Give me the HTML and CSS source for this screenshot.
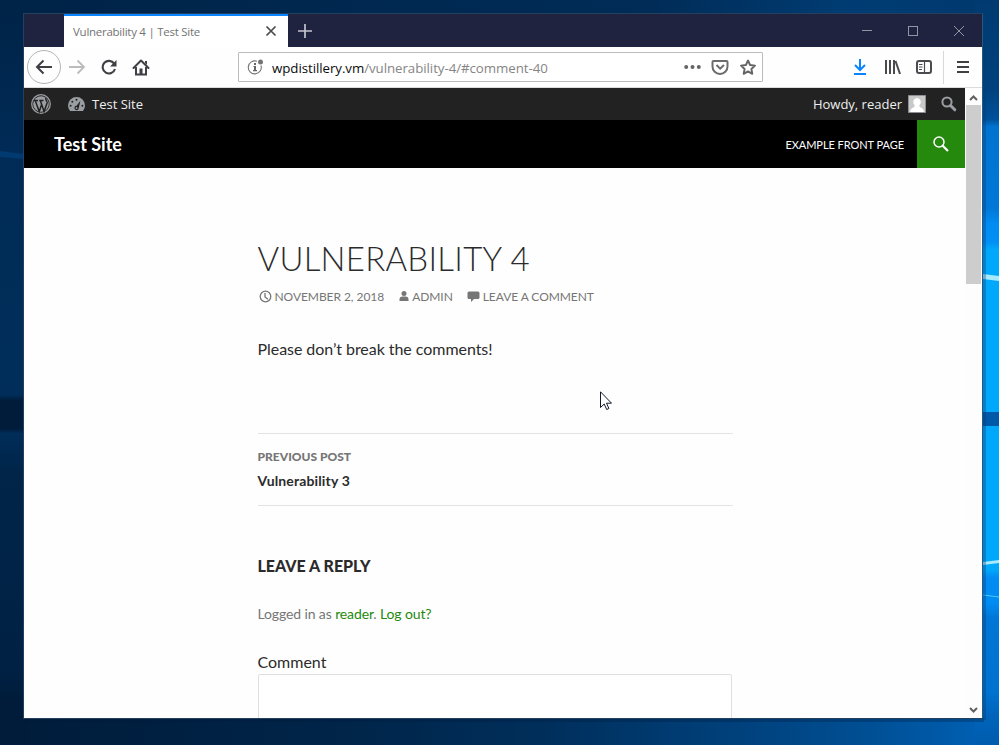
FILE: index.html
```html
<!DOCTYPE html>
<html lang="en">
<head>
<meta charset="utf-8">
<title>Vulnerability 4 | Test Site</title>
<link rel="stylesheet" href="styles.css">
</head>
<body>
<svg class="wallpaper" viewBox="0 0 999 745" aria-hidden="true">
  <defs>
    <linearGradient id="top" x1="0" x2="1"><stop offset="0" stop-color="#002347"/><stop offset=".65" stop-color="#002c57"/><stop offset=".85" stop-color="#003c73"/><stop offset="1" stop-color="#00386d"/></linearGradient>
    <linearGradient id="bottom" x1="0" x2="1"><stop offset="0" stop-color="#001c3a"/><stop offset=".1" stop-color="#001e3e"/><stop offset=".35" stop-color="#002549"/><stop offset=".55" stop-color="#002f5c"/><stop offset=".75" stop-color="#00427e"/><stop offset=".87" stop-color="#004f94"/><stop offset="1" stop-color="#0062b8"/></linearGradient>
    <linearGradient id="right" x1="0" y1="0" x2="0" y2="1"><stop offset="0" stop-color="#003a70"/><stop offset=".12" stop-color="#00427e"/><stop offset=".16" stop-color="#00509a"/><stop offset=".17" stop-color="#0073d0"/><stop offset=".28" stop-color="#0078d8"/><stop offset=".3" stop-color="#008cf2"/><stop offset=".325" stop-color="#0090f5"/><stop offset=".335" stop-color="#00a8fb"/><stop offset=".765" stop-color="#00a8fb"/><stop offset=".775" stop-color="#008cf2"/><stop offset=".81" stop-color="#008cf2"/><stop offset=".83" stop-color="#0076d6"/><stop offset=".93" stop-color="#0072d0"/><stop offset=".96" stop-color="#0064bb"/><stop offset="1" stop-color="#005cae"/></linearGradient>
    <linearGradient id="left" x1="0" y1="0" x2="0" y2="1"><stop offset="0" stop-color="#002347"/><stop offset=".2" stop-color="#002b56"/><stop offset=".5" stop-color="#002e5a"/><stop offset=".53" stop-color="#002d59"/><stop offset=".538" stop-color="#001c3a"/><stop offset=".575" stop-color="#001c3a"/><stop offset=".582" stop-color="#002d59"/><stop offset=".63" stop-color="#002549"/><stop offset=".9" stop-color="#002144"/><stop offset=".94" stop-color="#001c3a"/><stop offset="1" stop-color="#001c3a"/></linearGradient>
  </defs>
  <rect width="999" height="16" fill="url(#top)"/>
  <rect y="710" width="999" height="35" fill="url(#bottom)"/>
  <rect width="30" height="745" fill="url(#left)"/>
  <rect x="975" width="24" height="745" fill="url(#right)"/>
  <path d="M0 151l24 3v5l-24-2z" fill="#003a70"/>
  <path d="M975 412h24v14h-24z" fill="#0058a8"/>
  <path d="M975 273l24 3v5l-24-3zM975 563l24-3v3l-24 3z" fill="#a5eaff"/>
  <path d="M975 594l24 3" stroke="#49caff"/>
  <path d="M982 14h4v706h-4z" fill="#003d78" opacity=".35"/>
  <path d="M24 718h960v4H24z" fill="#001c3a" opacity=".3"/>
</svg>
<div class="window">
  <div class="titlebar">
    <div class="tab"><span>Vulnerability 4 | Test Site</span>
      <svg width="12" height="12" viewBox="0 0 12 12"><path d="M1.500 1.500l9 9M10.500 1.500l-9 9" stroke="#4a4a4f" stroke-width="1.700"/></svg>
    </div>
    <svg class="plus" width="14" height="14" viewBox="0 0 14 14"><path d="M7 0v14M0 7h14" stroke="#c4c4ce" stroke-width="1.700"/></svg>
    <svg class="controls" width="104" height="12" viewBox="0 0 104 12" fill="none" stroke="#9494a3" shape-rendering="crispEdges"><path d="M0 5.500h10M46.500 1.500h9v9h-9z"/><path d="M92 1l10 10M102 1L92 11" shape-rendering="auto"/></svg>
  </div>
  <div class="toolbar">
    <div class="nav">
      <span class="back"><svg width="18" height="16" viewBox="0 0 18 16"><path d="M17 8H2M8.500 1.500L2 8l6.500 6.500" fill="none" stroke="#3f3f44" stroke-width="2"/></svg></span>
      <svg width="18" height="16" viewBox="0 0 18 16"><path d="M1 8h15M9.500 1.500L16 8l-6.500 6.500" fill="none" stroke="#bcbcbc" stroke-width="1.800"/></svg>
      <svg width="16" height="16" viewBox="0 0 16 16"><path d="M13.200 4.600A6.300 6.300 0 1 0 14 10" fill="none" stroke="#3f3f44" stroke-width="2.100"/><path d="M15.500 1v6.500H9z" fill="#3f3f44"/></svg>
      <svg width="18" height="17" viewBox="0 0 18 17"><path d="M1.500 9L9 1.500 16.500 9" fill="none" stroke="#3f3f44" stroke-width="2" stroke-linecap="round" stroke-linejoin="round"/><path d="M4 8v7.500h10V8" fill="none" stroke="#3f3f44" stroke-width="2"/><path d="M7.500 9.500h3v6h-3z" fill="#3f3f44"/><path d="M13 2h2v4l-2-2z" fill="#3f3f44"/></svg>
    </div>
    <div class="url">
      <svg width="17" height="17" viewBox="0 0 17 17"><path d="M10 2.300A6.500 6.500 0 1 0 14 6.500" fill="none" stroke="#747474" stroke-width="1.100"/><circle cx="13.500" cy="3" r="2.500" fill="#747474"/><path d="M7 4h2v2H7zM6.500 7H9v4h1v1.200H6V11h1V8h-.5z" fill="#656565"/></svg>
      <span class="address"><b>wpdistillery.vm</b>/vulnerability-4/#comment-40</span>
      <svg class="urlicons" width="74" height="17" viewBox="0 0 74 17"><g fill="#656565"><circle cx="2.200" cy="8" r="2"/><circle cx="8.500" cy="8" r="2"/><circle cx="14.800" cy="8" r="2"/></g><path d="M29.500 2h13q1 0 1 1v4.500a7 7 0 0 1-15 0V3q0-1 1-1zM32.500 6l3.700 3.700L40 6" fill="none" stroke="#6b6b6b" stroke-width="2"/><path d="M64 1.500l2.100 4.500 4.900.6-3.600 3.400.9 4.800L64 12.400l-4.300 2.400.9-4.800L57 6.600l4.900-.6z" fill="none" stroke="#656565" stroke-width="1.900" stroke-linejoin="round"/></svg>
    </div>
    <svg class="tools" width="78" height="16" viewBox="0 0 78 16"><path d="M6 0v11M1 6l5 5 5-5M0 15h12" fill="none" stroke="#0a84ff" stroke-width="2"/><path d="M32 1v14M36 1v14M40 1v14M41.500 2l4.500 13" fill="none" stroke="#4a4a4f" stroke-width="2"/><rect x="63" y="2" width="14" height="12" rx="2" fill="none" stroke="#4a4a4f" stroke-width="2"/><path d="M70.500 2v12M65 5.500h3.500M65 8h3.500M65 10.500h3" stroke="#4a4a4f" stroke-width="1.200"/></svg>
    <span class="divider"></span>
    <svg class="menu" width="12" height="12" viewBox="0 0 12 12"><path d="M0 1h12M0 6h12M0 11h12" stroke="#3f3f44" stroke-width="2"/></svg>
  </div>
  <div class="viewport">
    <div class="page">
      <div class="adminbar">
        <svg width="20" height="20" viewBox="0 0 20 20"><circle cx="10" cy="10" r="9.300" fill="none" stroke="#9a9ea2" stroke-width="1.300"/><circle cx="10" cy="10" r="7.800" fill="#9a9ea2"/><path d="M3 6.500h4M8.200 6.500h4.300M4.200 6.500l4 11 2.400-7M9.300 6.500l3.800 11 3-8.500c.5-2-2-2.500-1.200-5" fill="none" stroke="#222" stroke-width="1.500"/></svg>
        <svg class="dash" width="17" height="15" viewBox="0 0 17 15"><path d="M2 14Q0 11.500 0 8.500a8.500 8.500 0 0 1 17 0q0 3-2 5.500z" fill="#9a9ea2"/><g fill="#222"><circle cx="8.500" cy="2.800" r="1"/><circle cx="4.300" cy="4.700" r="1"/><circle cx="2.600" cy="8.800" r="1"/><circle cx="14.400" cy="8.800" r="1"/><path d="M12.400 3.800l-1.600 7a2.200 2.200 0 1 1-2.200-2z"/></g><circle cx="8.500" cy="11" r=".9" fill="#9a9ea2"/></svg>
        <span class="site">Test Site</span>
        <span class="howdy">Howdy, reader</span>
        <svg class="avatar" width="18" height="18" viewBox="0 0 18 18"><path d="M.5.500h17v17H.5z" fill="#c8c8c8" stroke="#8c8f94"/><path d="M9 3a4 4 0 0 1 2.500 7v2q4 1 4.500 5H2q.5-4 4.500-5v-2A4 4 0 0 1 9 3z" fill="#fff"/></svg>
        <svg width="16" height="16" viewBox="0 0 16 16" fill="none" stroke="#9a9ea2"><circle cx="6" cy="6" r="4.600" stroke-width="2"/><path d="M9.500 9.500l4.300 4.300" stroke-width="3" stroke-linecap="round"/></svg>
      </div>
      <header>
        <strong>Test Site</strong>
        <span class="front">EXAMPLE FRONT PAGE</span>
        <span class="search"><svg width="16" height="16" viewBox="0 0 16 16" fill="none" stroke="#fff"><circle cx="6" cy="6" r="5" stroke-width="1.500"/><path d="M9.500 9.500l5.500 5.500" stroke-width="2.200"/></svg></span>
      </header>
      <main>
        <h1>VULNERABILITY 4</h1>
        <div class="meta">
          <svg width="13" height="13" viewBox="0 0 13 13" fill="none" stroke="#767676" stroke-width="1.300"><circle cx="6.500" cy="6.500" r="5.300"/><path d="M6 3v4l3 2.300"/></svg>
          <span class="date">NOVEMBER 2, 2018</span>
          <svg width="10" height="11" viewBox="0 0 10 11" fill="#767676"><circle cx="5" cy="2.600" r="2.500"/><path d="M.5 10V8.500q0-3 3-3h3q3 0 3 3V10z"/></svg>
          <span class="author">ADMIN</span>
          <svg class="bubble" width="13" height="11" viewBox="0 0 13 11" fill="#767676"><path d="M2 .5h9q1.500 0 1.500 1.500v4.500Q12.500 8 11 8H7l-3 3V8H2Q.5 8 .5 6.500V2Q.5.500 2 .5z"/></svg>
          <span class="leave">LEAVE A COMMENT</span>
        </div>
        <p class="body">Please don’t break the comments!</p>
        <nav class="previous"><span class="label">PREVIOUS POST</span><span class="title">Vulnerability 3</span></nav>
        <h2>LEAVE A REPLY</h2>
        <p class="logged">Logged in as <a>reader</a>. <a>Log out?</a></p>
        <label>Comment</label>
        <div class="textarea"></div>
      </main>
    </div>
    <div class="scrollbar">
      <svg width="9" height="6" viewBox="0 0 9 6"><path d="M1 5l3.500-3.500L8 5" fill="none" stroke="#606060" stroke-width="2"/></svg>
      <div class="thumb"></div>
      <svg class="down" width="9" height="6" viewBox="0 0 9 6"><path d="M1 1l3.500 3.500L8 1" fill="none" stroke="#606060" stroke-width="2"/></svg>
    </div>
  </div>
</div>
<svg class="cursor" width="12" height="20" viewBox="0 0 12 20"><path d="M.5.800v15.700l3.700-3.500 2.500 5.500 2.200-1-2.400-5.300h5z" fill="#fff" stroke="#111827"/></svg>
</body>
</html>
```

FILE: styles.css
```css
* { box-sizing: border-box; }
body { margin: 0; width: 999px; height: 745px; overflow: hidden; position: relative; background: #002347; padding: 13px 0 0 23px; }
svg { display: block; flex: none; }
span, strong, label, h1, h2, p { white-space: nowrap; }
.wallpaper { position: absolute; left: 0; top: 0; width: 999px; height: 745px; }
.window { position: relative; width: 960px; height: 706px; border: 1px solid #24405f; border-right-color: #2b5878; display: flex; flex-direction: column; background: #fff; overflow: hidden; }
.titlebar { height: 33px; background: #202340; display: flex; align-items: center; padding-left: 40px; flex: none; }
.tab { width: 224px; height: 33px; background: #fff; border-top: 2px solid #0a84ff; display: flex; align-items: center; justify-content: space-between; padding: 0 11px 1px 9px; font: 11.5px "Open Sans", sans-serif; color: #737373; }
.tab span { letter-spacing: -.26px; padding-top: 1px; }
.plus { margin-left: 10px; }
.controls { margin-left: auto; margin-right: 16px; }
.toolbar { height: 41px; flex: none; background: #fefefe; border-bottom: 1px solid #dcdcdc; display: flex; align-items: center; padding-left: 3px; }
.nav { display: flex; align-items: center; width: 211px; }
.back { width: 34px; height: 34px; border: 1px solid #b5b5b5; border-radius: 50%; display: grid; place-items: center; margin-right: 7px; }
.nav > svg { margin-right: 15px; }
.url { width: 525px; height: 30px; border: 1px solid #bcbcbc; border-radius: 1px; background: #fff; display: flex; align-items: center; padding: 0 4px 0 8px; }
.address { margin-left: 8px; padding-top: 2px; font: 13.3px "Open Sans", sans-serif; letter-spacing: -.06px; color: #858585; }
.address b { font-weight: 400; color: #0c0c0d; }
.urlicons { margin-left: auto; }
.tools { margin-left: 91px; }
.divider { width: 1px; height: 33px; background: #d8d8d8; margin-left: 11px; }
.menu { margin-left: 13px; }
.viewport { flex: 1; min-height: 0; display: flex; }
.page { width: 941px; overflow: hidden; background: #fefefe; }
.adminbar { height: 32px; background: #222; display: flex; align-items: center; padding: 0 8px 0 7px; font: 13px "Open Sans", sans-serif; color: #eee; }
.dash { margin-left: 17px; }
.site { margin-left: 7px; }
.howdy { margin-left: auto; }
.avatar { margin: 0 15px 0 6px; }
header { height: 48px; background: #000; color: #fff; display: flex; align-items: center; padding-left: 30px; font-family: Lato, sans-serif; }
header strong { font-size: 18px; line-height: 48px; }
.front { margin-left: auto; margin-right: 13px; font-size: 11px; letter-spacing: -.05px; }
.search { width: 48px; height: 48px; background: #24890d; display: grid; place-items: center; }
main { width: 475px; margin-left: 233.500px; padding-top: 71px; font-family: Lato, sans-serif; color: #2b2b2b; }
h1 { margin: 0; font-size: 33px; font-weight: 300; line-height: 39px; letter-spacing: .26px; }
.meta { height: 20px; margin-top: 8px; padding-left: 1px; display: flex; align-items: center; font-size: 12px; letter-spacing: -.06px; color: #767676; }
.date { margin: 0 15px 0 3px; }
.author { margin: 0 14px 0 3px; }
.leave { margin-left: 3px; }
.body { margin: 31px 0 0; font-size: 16px; line-height: 24px; letter-spacing: -.05px; }
.previous { margin-top: 72px; height: 73px; border-top: 1px solid #e3e3e3; border-bottom: 1px solid #e3e3e3; padding-top: 11px; display: flex; flex-direction: column; line-height: 24px; }
.label { font-size: 12px; font-weight: 900; color: #767676; }
.title { font-size: 14px; font-weight: 700; letter-spacing: .14px; }
h2 { margin: 48px 0 0; font-size: 16px; line-height: 24px; font-weight: 900; }
.logged { margin: 24px 0; font-size: 14px; line-height: 24px; letter-spacing: -.12px; color: #767676; }
.logged a { color: #24890d; }
label { display: block; font-size: 16px; line-height: 24px; }
.textarea { width: 474px; height: 120px; border: 1px solid #dfdfdf; border-radius: 2px; background: #fff; }
.scrollbar { width: 17px; background: #fdfdfd; padding: 7px 1px 5px; display: flex; flex-direction: column; align-items: center; }
.thumb { width: 15px; height: 179px; margin-top: 4px; background: #cdcdcd; }
.down { margin-top: auto; }
.cursor { position: absolute; left: 600px; top: 391px; }
```
